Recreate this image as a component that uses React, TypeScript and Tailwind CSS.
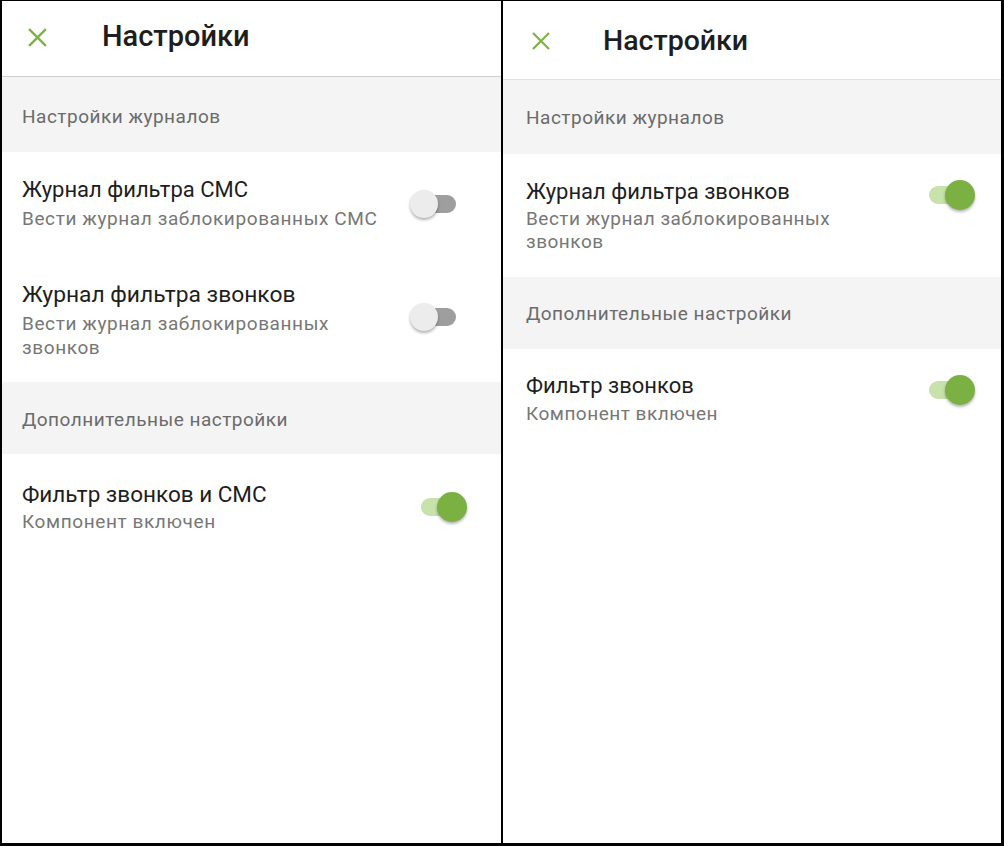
import React from "react";

const font = { fontFamily: "Roboto, 'Noto Sans', sans-serif" };

function Toggle({ on }: { on: boolean }) {
  if (on) {
    return (
      <div className="relative w-[46px] h-[30px] shrink-0">
        <div className="absolute left-0 top-[6px] w-[36px] h-[18px] rounded-full bg-[#c8e2ab]" />
        <div className="absolute right-0 top-0 w-[30px] h-[30px] rounded-full bg-[#7bb043] shadow-[0_2px_3px_rgba(0,0,0,0.3)]" />
      </div>
    );
  }
  return (
    <div className="relative w-[46px] h-[30px] shrink-0">
      <div className="absolute right-0 top-[6px] w-[36px] h-[18px] rounded-full bg-[#9e9e9e]" />
      <div className="absolute left-0 top-[1px] w-[28px] h-[28px] rounded-full bg-[#ececec] shadow-[0_2px_3px_rgba(0,0,0,0.3)]" />
    </div>
  );
}

function CloseIcon({ size }: { size: number }) {
  return (
    <svg width={size} height={size} viewBox="0 0 20 20">
      <path d="M2 2 L18 18 M18 2 L2 18" stroke="#7cb342" strokeWidth="2.2" strokeLinecap="butt" />
    </svg>
  );
}

function Screen({ left }: { left: boolean }) {
  if (left) {
    return (
      <div className="flex flex-col bg-white w-[499px] h-full" style={font}>
        <div className="h-[75px] flex items-center border-b border-[#cfcfcf] box-content pb-0">
          <div className="pl-[25px] w-[100px] mb-[3px]">
            <CloseIcon size={21} />
          </div>
          <div className="text-[29px] font-medium text-[#1e1e1e] mb-[4px]">Настройки</div>
        </div>
        <div className="h-[75px] bg-[#f4f4f4] flex items-center pl-[20px] pt-[5px] text-[19px] text-[#6b6b6b] tracking-[0.5px]">
          Настройки журналов
        </div>
        <div className="flex items-start pl-[20px] pr-[45px] pt-[24px] h-[123px]">
          <div className="flex-1">
            <div className="text-[22px] text-[#1e1e1e] leading-[28px]">Журнал фильтра СМС</div>
            <div className="text-[19px] text-[#777] leading-[24px] tracking-[0.6px] mt-[3px]">Вести журнал заблокированных СМС</div>
          </div>
          <div className="mt-[13px]"><Toggle on={false} /></div>
        </div>
        <div className="flex items-start pl-[20px] pr-[45px] pt-[6px] h-[107px]">
          <div className="flex-1">
            <div className="text-[22.8px] text-[#1e1e1e] leading-[28px]">Журнал фильтра звонков</div>
            <div className="text-[19px] text-[#777] leading-[24px] tracking-[0.6px] mt-[3px] w-[330px]">Вести журнал заблокированных звонков</div>
          </div>
          <div className="mt-[21px]"><Toggle on={false} /></div>
        </div>
        <div className="h-[72px] bg-[#f4f4f4] flex items-center pl-[20px] pt-[4px] text-[19px] text-[#6b6b6b] tracking-[0.5px]">
          Дополнительные настройки
        </div>
        <div className="flex items-start pl-[20px] pr-[34px] pt-[26px]">
          <div className="flex-1">
            <div className="text-[22.5px] text-[#1e1e1e] leading-[28px]">Фильтр звонков и СМС</div>
            <div className="text-[19px] text-[#777] leading-[24px] tracking-[0.6px] mt-[2px]">Компонент включен</div>
          </div>
          <div className="mt-[12px]"><Toggle on={true} /></div>
        </div>
      </div>
    );
  }
  return (
    <div className="flex flex-col bg-white w-[498px] h-full" style={font}>
      <div className="h-[78px] flex items-center border-b border-[#e3e3e3] box-content">
        <div className="pl-[28px] w-[100px] pt-[2px]">
          <CloseIcon size={20} />
        </div>
        <div className="text-[28.5px] font-medium text-[#1e1e1e] pt-[3px]">Настройки</div>
      </div>
      <div className="h-[74px] bg-[#f4f4f4] flex items-center pl-[23px] pt-[3px] text-[19px] text-[#6b6b6b] tracking-[0.5px]">
        Настройки журналов
      </div>
      <div className="flex items-start pl-[23px] pr-[26px] pt-[24px] h-[123px]">
        <div className="flex-1">
          <div className="text-[22px] text-[#1e1e1e] leading-[28px]">Журнал фильтра звонков</div>
          <div className="text-[19px] text-[#777] leading-[23px] tracking-[0.5px] mt-[1px] w-[330px]">Вести журнал заблокированных звонков</div>
        </div>
        <div className="mt-[2px]"><Toggle on={true} /></div>
      </div>
      <div className="h-[72px] bg-[#f4f4f4] flex items-center pl-[23px] pt-[2px] text-[19px] text-[#6b6b6b] tracking-[0.5px]">
        Дополнительные настройки
      </div>
      <div className="flex items-start pl-[23px] pr-[26px] pt-[23px]">
        <div className="flex-1">
          <div className="text-[22px] text-[#1e1e1e] leading-[28px]">Фильтр звонков</div>
          <div className="text-[19px] text-[#777] leading-[24px] tracking-[0.5px] mt-[2px]">Компонент включен</div>
        </div>
        <div className="mt-[3px]"><Toggle on={true} /></div>
      </div>
    </div>
  );
}

export default function App() {
  return (
    <div className="w-[1004px] h-[846px] bg-black flex gap-[2px] pt-[1px] pl-[2px] pr-[3px] pb-[3px]">
      <Screen left={true} />
      <Screen left={false} />
    </div>
  );
}
